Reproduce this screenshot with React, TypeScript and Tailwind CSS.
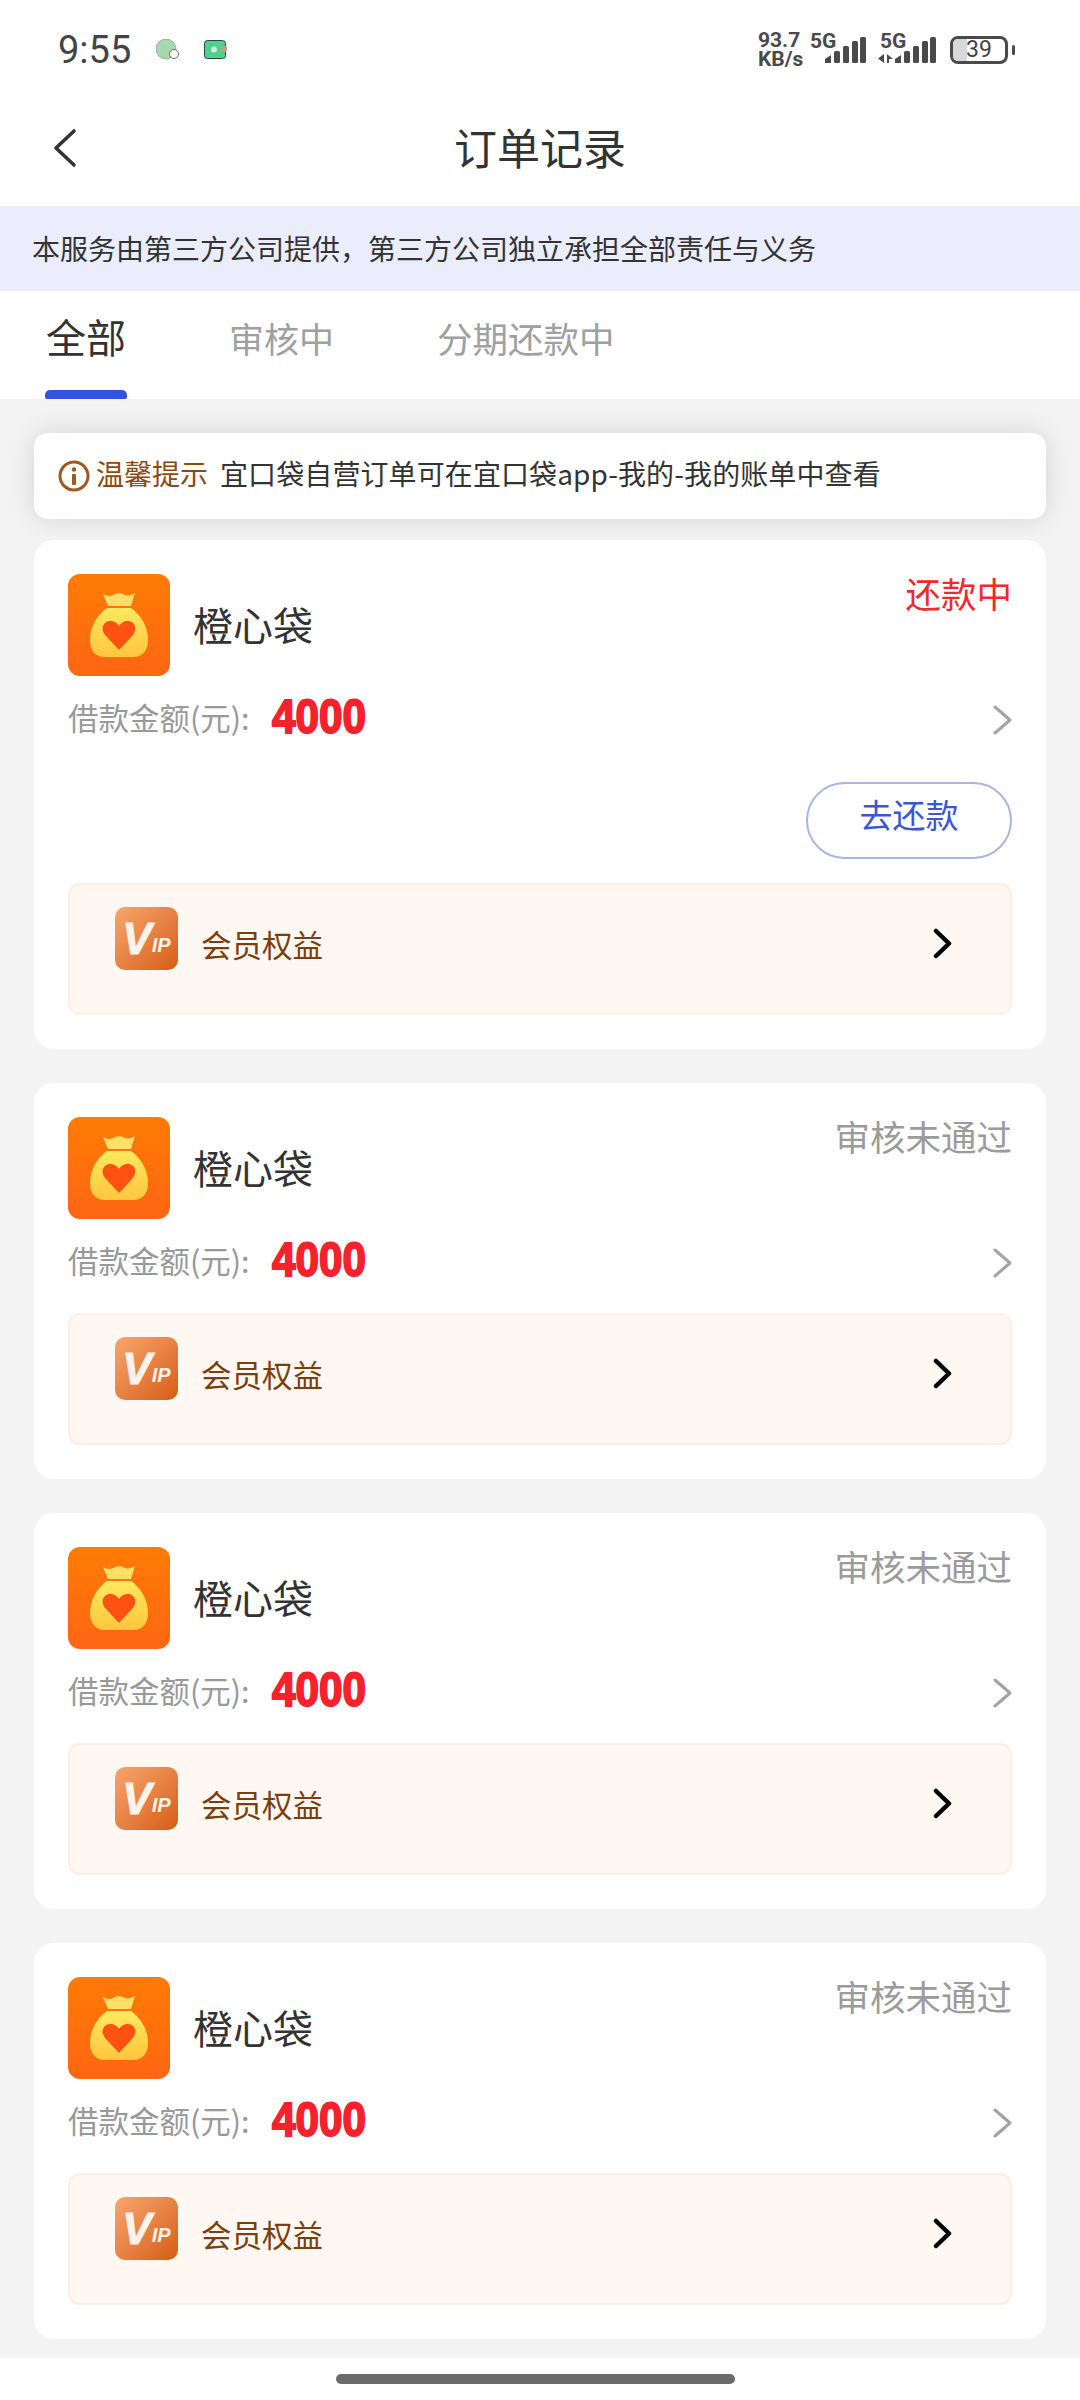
const font = { cjk: 'font-["Noto_Sans_CJK_SC","Noto_Sans",sans-serif]' }

function SignalBars() {
  return (
    <svg width="41" height="26" viewBox="0 0 41 26" fill="#4a4a4a">
      <path d="M0 26V22L6 18V26Z" />
      <rect x="9" y="14" width="6" height="12" rx="1.5" />
      <rect x="18" y="9" width="6" height="17" rx="1.5" />
      <rect x="27" y="4" width="6" height="22" rx="1.5" />
      <rect x="35" y="0" width="6" height="26" rx="1.5" />
    </svg>
  )
}

function StatusBar() {
  return (
    <div className="h-[88px] pt-3 flex items-center justify-between pl-[58px] pr-[65px] bg-white">
      <div className="flex items-center">
        <span className="font-['Roboto',sans-serif] text-[38px] leading-none text-[#444444]">9:55</span>
        <svg className="ml-[25px]" width="24" height="22" viewBox="0 0 24 22">
          <circle cx="10" cy="10" r="10" fill="#a8d8ae" stroke="#5d7a60" strokeWidth="0.5" />
          <circle cx="18" cy="15" r="4.5" fill="#ffffff" stroke="#4a5a4a" strokeWidth="0.8" />
        </svg>
        <svg className="ml-[24px]" width="24" height="20" viewBox="0 0 24 20">
          <rect x="0.5" y="0.5" width="21" height="18" rx="3" fill="#4fd08f" stroke="#2a4a38" strokeWidth="1" />
          <circle cx="10" cy="9.5" r="3" fill="#c8f0d8" />
          <rect x="17" y="6" width="6" height="6" rx="1.5" fill="#b9a57c" />
        </svg>
      </div>
      <div className="flex items-center text-[#4a4a4a] font-['Roboto',sans-serif]">
        <div className="flex flex-col font-bold text-[21px] leading-[19px] w-[44px]">
          <span>93.7</span>
          <span>KB/s</span>
        </div>
        <div className="ml-[8px] relative w-[56px] h-[32px]">
          <span className="absolute left-0 top-[-3px] font-bold text-[21px] leading-[21px]">5G</span>
          <div className="absolute right-0 top-[3px]">
            <SignalBars />
          </div>
        </div>
        <div className="ml-[12px] relative w-[58px] h-[32px]">
          <span className="absolute left-[2px] top-[-3px] font-bold text-[21px] leading-[21px]">5G</span>
          <svg className="absolute left-0 top-[20px]" width="15" height="9" viewBox="0 0 15 9" fill="#4a4a4a">
            <path d="M6 0V9L0 4.5Z" />
            <path d="M9 0V9H11V5H15Z" />
          </svg>
          <div className="absolute right-0 top-[3px]">
            <SignalBars />
          </div>
        </div>
        <div className="ml-[14px] flex items-center">
          <div className="w-[58px] h-[28px] rounded-[8px] border-[3px] border-[#4a4a4a] bg-white flex items-center relative overflow-hidden">
            <div className="w-[14px] h-full bg-[#d8d8d8]" />
            <span className="absolute inset-0 text-center font-['Roboto',sans-serif] text-[23px] leading-[22px] text-[#444444]">39</span>
          </div>
          <div className="ml-[4px] w-[3px] h-[10px] rounded-sm bg-[#4a4a4a]" />
        </div>
      </div>
    </div>
  )
}

function BagLogo() {
  return (
    <svg className="shrink-0" width="102" height="102" viewBox="0 0 102 102">
      <defs>
        <linearGradient id="bagBg" x1="0" y1="0" x2="0" y2="1">
          <stop offset="0" stopColor="#ff7b05" />
          <stop offset="1" stopColor="#ff6613" />
        </linearGradient>
        <linearGradient id="bagBody" x1="0" y1="0" x2="0" y2="1">
          <stop offset="0" stopColor="#ffe95e" />
          <stop offset="1" stopColor="#ffc63e" />
        </linearGradient>
      </defs>
      <rect width="102" height="102" rx="12" fill="url(#bagBg)" />
      <path d="M35 20C40 23 44 22 47 20C49 19 53 19 55 20C58 22 62 22 67 19L63 32H40Z" fill="#ffdf68" />
      <path d="M39 34H63C73 41 80 53 80 66C80 77 74 83 65 83H37C28 83 22 77 22 66C22 53 29 41 39 34Z" fill="url(#bagBody)" />
      <path d="M51 76L38 62C31 54 36 46 44 47C47 47.5 50 50 51 52C52 50 55 47.5 58 47C66 46 71 54 64 62Z" fill="#ff5210" />
    </svg>
  )
}

function VipIcon() {
  return (
    <div className="shrink-0 w-[63px] h-[63px] rounded-[10px] bg-gradient-to-br from-[#f7a66c] to-[#d65c0a] flex items-center justify-center">
      <span className="font-['Liberation_Sans',sans-serif] italic font-bold text-[#fdf3ea] text-[44px] leading-none [-webkit-text-stroke:1px_#fdf3ea]">V</span>
      <span className="font-['Liberation_Sans',sans-serif] italic font-bold text-[#fdf3ea] text-[20px] leading-none mt-[12px]">IP</span>
    </div>
  )
}

function OrderCard({ status, active }: { status: string; active?: boolean }) {
  return (
    <div className="bg-white rounded-[20px] p-[34px]">
      <div className="flex items-start justify-between h-[102px]">
        <div className="flex items-center">
          <BagLogo />
          <span className="ml-[23px] mb-[3px] text-[40px] leading-[48px] text-[#333333]">橙心袋</span>
        </div>
        <span className={active ? '-mt-[3px] text-[35.5px] leading-[44px] text-[#ee2a2a]' : '-mt-[3px] text-[35.5px] leading-[44px] text-[#9b9b9b]'}>
          {status}
        </span>
      </div>
      <div className="mt-[14px] h-[60px] flex items-center justify-between">
        <div className="flex items-center">
          <span className="mb-[6px] text-[30.5px] leading-[40px] text-[#999999] w-[204px]">借款金额(元):</span>
          <span className="mb-[6px] font-['Liberation_Sans',sans-serif] font-bold text-[48px] leading-[56px] text-[#f5222d] inline-block origin-left scale-x-[0.88] [-webkit-text-stroke:2px_#f5222d]">
            4000
          </span>
        </div>
        <svg width="20" height="30" viewBox="0 0 20 30" fill="none" stroke="#a3a3a3" strokeWidth="3" strokeLinecap="round" strokeLinejoin="round">
          <path d="M3 2L18 15L3 28" />
        </svg>
      </div>
      {active && (
        <div className="mt-[32px] flex justify-end">
          <div className="w-[206px] h-[77px] rounded-full border-2 border-[#a9b5e2] flex items-center justify-center pb-[12px] text-[33px] text-[#3a56d4]">
            去还款
          </div>
        </div>
      )}
      <div className={active ? 'mt-[24px] h-[132px] rounded-[12px] bg-[#fff7f2] border-2 border-[#fbeee4] flex items-start pl-[45px] pr-[57px] pt-[22px]' : 'mt-[20px] h-[132px] rounded-[12px] bg-[#fff7f2] border-2 border-[#fbeee4] flex items-start pl-[45px] pr-[57px] pt-[22px]'}>
        <VipIcon />
        <span className="ml-[23px] mt-[17px] text-[30.5px] leading-[40px] text-[#7a3f0c]">会员权益</span>
        <svg className="ml-auto mt-[21px]" width="20" height="32" viewBox="0 0 20 32" fill="none" stroke="#000000" strokeWidth="4.5" strokeLinecap="round" strokeLinejoin="round">
          <path d="M3 3L16 15.5L3 28" />
        </svg>
      </div>
    </div>
  )
}

export default function App() {
  return (
    <div className={`w-[1080px] h-[2400px] flex flex-col bg-white overflow-hidden ${font.cjk}`}>
      <StatusBar />

      <div className="relative h-[118px] flex items-center justify-center shrink-0">
        <svg className="absolute left-[52px] top-[40px]" width="26" height="40" viewBox="0 0 26 40" fill="none" stroke="#333333" strokeWidth="3.6" strokeLinecap="round" strokeLinejoin="round">
          <path d="M22 3L4 20L22 37" />
        </svg>
        <span className="mb-[3px] text-[43px] leading-[52px] text-[#333333]">订单记录</span>
      </div>

      <div className="h-[85px] shrink-0 bg-[#ebedfc] flex items-center pl-[32px] pb-[2px] text-[28px] text-[#333333]">
        本服务由第三方公司提供，第三方公司独立承担全部责任与义务
      </div>

      <div className="h-[108px] shrink-0 flex items-start pl-[45px] bg-white">
        <div className="relative h-full w-[82px] flex justify-center pt-[21px]">
          <span className="text-[40px] leading-[48px] text-[#333333]">全部</span>
          <div className="absolute bottom-0 left-0 w-full h-[9px] rounded-t-[5px] rounded-b-[2px] bg-[#3452e1]" />
        </div>
        <span className="ml-[102px] pt-[25px] text-[35px] leading-[44px] text-[#a0a0a0]">审核中</span>
        <span className="ml-[103px] pt-[25px] text-[35.5px] leading-[44px] text-[#a0a0a0]">分期还款中</span>
      </div>

      <div className="flex-1 bg-[#f3f3f3] px-[34px] pt-[34px]">
        <div className="h-[86px] rounded-[14px] bg-white shadow-[0_0_26px_rgba(0,0,0,0.13)] flex items-center pl-[24px] text-[28px]">
          <svg width="32" height="32" viewBox="0 0 32 32" fill="none" className="shrink-0">
            <circle cx="16" cy="16" r="14" stroke="#a0581f" strokeWidth="3" />
            <circle cx="16" cy="9.5" r="2.2" fill="#a0581f" />
            <rect x="14" y="14" width="4" height="11" rx="1" fill="#a0581f" />
          </svg>
          <span className="ml-[6px] mb-[6px] text-[#8b4a12]">温馨提示</span>
          <span className="ml-[12px] mb-[6px] text-[#333333] tracking-[0.1px]">宜口袋自营订单可在宜口袋app-我的-我的账单中查看</span>
        </div>
        <div className="mt-[21px] flex flex-col gap-[34px]">
          <OrderCard status="还款中" active />
          <OrderCard status="审核未通过" />
          <OrderCard status="审核未通过" />
          <OrderCard status="审核未通过" />
        </div>
      </div>

      <div className="h-[42px] shrink-0 bg-white flex justify-center pt-[16px] pr-[10px]">
        <div className="w-[399px] h-[10px] rounded-full bg-[#6b6b6b]" />
      </div>
    </div>
  )
}
